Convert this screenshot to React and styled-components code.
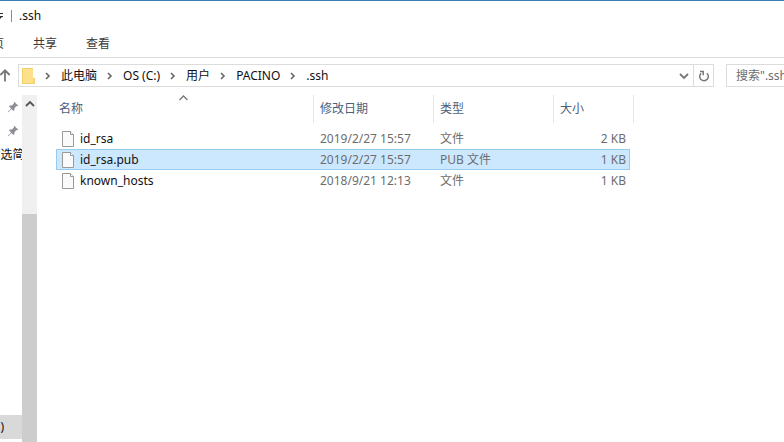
import React from 'react';
import styled, { createGlobalStyle } from 'styled-components';

const colors = {
  accent: '#3c7db5',
  line: '#dcdcdc',
  text: '#111',
  grey: '#6d6d6d',
  header: '#4c607a',
  selected: '#cce8ff',
  selectedLine: '#99cbf0',
};

const GlobalStyle = createGlobalStyle`
  *{
    box-sizing:border-box;
  }
  body{
    margin:0;
    background:#fff;
    color:${colors.text};
    font-family:"Noto Sans", "Noto Sans CJK SC", sans-serif;
    font-size:12px;
    line-height:20px;
  }
  button, input{
    font:inherit;
    color:inherit;
    border:none;
    background:none;
    padding:0;
    margin:0;
  }
  a{
    color:inherit;
    text-decoration:none;
  }
`;

const Window = styled.div`
  display:flex;
  flex-direction:column;
  height:100vh;
  overflow:hidden;
  border-top:1px solid ${colors.accent};
`;

const TitleBar = styled.header`
  display:flex;
  align-items:center;
  height:29px;
  flex:none;
`;

const Divider = styled.span`
  width:1px;
  height:12px;
  margin:0 7px;
  background:#8a8a8a;
`;

const Title = styled.h1`
  margin:0;
  font-size:12px;
  font-weight:400;
`;

const Ribbon = styled.nav`
  display:flex;
  align-items:center;
  gap:29px;
  height:28px;
  flex:none;
  margin-left:-20px;
  border-bottom:1px solid ${colors.line};
  color:#3b3b3b;
`;

const Toolbar = styled.div`
  display:flex;
  align-items:center;
  flex:none;
  height:37px;
  padding-bottom:2px;
`;

const UpButton = styled.button`
  display:flex;
  width:18px;
  justify-content:flex-start;
`;

const AddressBar = styled.div`
  display:flex;
  align-items:stretch;
  flex:1;
  height:23px;
  border:1px solid ${colors.line};
`;

const Crumbs = styled.div`
  display:flex;
  align-items:center;
  flex:1;
  padding-left:3px;
`;

const Separator = styled.span`
  display:flex;
  justify-content:center;
  width:26px;
`;

const AddressButton = styled.button`
  display:flex;
  align-items:center;
  justify-content:center;
  width:20px;
  border-left:1px solid ${props => (props.$line ? colors.line : 'transparent')};
`;

const Search = styled.input`
  flex:none;
  width:58px;
  height:23px;
  margin-left:12px;
  padding-left:9px;
  border:1px solid ${colors.line};
  border-right:none;
  outline:none;
  &::placeholder{
    color:${colors.grey};
    opacity:1;
  }
`;

const Body = styled.div`
  display:flex;
  flex:1;
  min-height:0;
`;

const Sidebar = styled.nav`
  display:flex;
  flex-direction:column;
  width:22px;
  padding-right:1px;
  overflow:hidden;
`;

const SideLink = styled.a`
  display:flex;
  align-items:center;
  justify-content:${props => props.$justify || 'center'};
  flex:none;
  height:24px;
  padding-left:4px;
  padding-right:${props => (props.$justify ? 18 : 0)}px;
  white-space:nowrap;
  background:${props => (props.$active ? '#d9d9d9' : 'transparent')};
  margin-top:${props => (props.$active ? 'auto' : 0)};
  margin-bottom:${props => (props.$active ? 3 : 0)}px;
`;

const Scrollbar = styled.div`
  display:flex;
  flex-direction:column;
  width:15px;
  background:#f0f0f0;
`;

const ScrollUp = styled.button`
  display:flex;
  align-items:center;
  justify-content:center;
  height:119px;
  padding-bottom:101px;
`;

const Thumb = styled.div`
  flex:1;
  background:#cdcdcd;
`;

const Files = styled.main`
  flex:1;
  min-width:0;
  padding-left:19px;
`;

const FileTable = styled.table`
  table-layout:fixed;
  width:578px;
  border-collapse:separate;
  border-spacing:0;
  tbody:before{
    content:"";
    display:block;
    height:5px;
  }
`;

const HeadCell = styled.th`
  position:relative;
  height:28px;
  padding:0 0 0 ${props => (props.$first ? 3 : 6)}px;
  border-right:1px solid #e5e5e5;
  color:${colors.header};
  font-weight:400;
  text-align:left;
`;

const SortMark = styled.svg`
  position:absolute;
  top:0;
  left:50%;
  margin-left:-6px;
`;

const Cell = styled.td`
  height:21px;
  padding:0 ${props => (props.$right ? 3 : 0)}px 0 6px;
  line-height:19px;
  text-align:${props => (props.$right ? 'right' : 'left')};
  color:${colors.grey};
`;

const NameCell = styled(Cell)`
  padding-left:5px;
  color:${colors.text};
`;

const FileName = styled.span`
  display:flex;
  align-items:center;
  gap:6px;
`;

const Row = styled.tr`
  ${Cell}, ${NameCell}{
    border:1px solid transparent;
    border-width:1px 0;
    ${props => props.$selected && `
      background:${colors.selected};
      border-color:${colors.selectedLine};
    `}
  }
  ${NameCell}{
    border-left-width:1px;
  }
  ${Cell}:nth-child(4){
    border-right-width:1px;
  }
`;

const Chevron = ({ d, color = '#666', width = 1.6 }) => (
  <svg width="10" height="10" viewBox="0 0 10 10" fill="none" stroke={color} strokeWidth={width}>
    <path d={d} />
  </svg>
);

const Pin = () => (
  <svg width="12" height="12" viewBox="0 0 12 12" fill="#8c8f93">
    <path d="M7.2.7 11.3 4.8 10.3 5.3 9.5 5 7.5 7 7.4 9.2 6.6 10 4.5 7.9 1 11.4.6 11 4.1 7.5 2 5.4 2.8 4.6 5 4.5 7 2.5 6.7 1.7Z" />
  </svg>
);

const FileIcon = () => (
  <svg width="12" height="16" viewBox="0 0 12 16">
    <path d="M.5.5h8l3 3v12H.5z" fill="#fafafa" stroke="#999" />
    <path d="M8.5.5v3h3" fill="#fff" stroke="#999" />
  </svg>
);

const FolderIcon = () => (
  <svg width="13" height="16" viewBox="0 0 13 16">
    <path d="M0 0h11v10h2v6H0z" fill="#f3d06c" />
    <path d="M1 1h10v14H1z" fill="#fde08a" />
    <path d="M11 10.5h1.5V15H11z" fill="#f6d678" />
  </svg>
);

const crumbs = ['此电脑', 'OS (C:)', '用户', 'PACINO', '.ssh'];

const files = [
  { name: 'id_rsa', date: '2019/2/27 15:57', type: '文件', size: '2 KB' },
  { name: 'id_rsa.pub', date: '2019/2/27 15:57', type: 'PUB 文件', size: '1 KB', selected: true },
  { name: 'known_hosts', date: '2018/9/21 12:13', type: '文件', size: '1 KB' },
];

const App = () => (
  <Window>
    <GlobalStyle />
    <TitleBar>
      <svg width="4" height="10" viewBox="0 0 4 10" fill="#333">
        <path d="M0 2h3v1H0zM0 5h3v1H2L0 8z" />
      </svg>
      <Divider />
      <Title>.ssh</Title>
    </TitleBar>
    <Ribbon>
      <a href="#home">主页</a>
      <a href="#share">共享</a>
      <a href="#view">查看</a>
    </Ribbon>
    <Toolbar>
      <UpButton aria-label="上移">
        <svg width="11" height="13" viewBox="0 0 11 13" fill="none" stroke="#777" strokeWidth="1.8">
          <path d="M5 12.5V1.5M.3 6 5 1.3 9.7 6" />
        </svg>
      </UpButton>
      <AddressBar>
        <Crumbs>
          <FolderIcon />
          {crumbs.map(crumb => (
            <React.Fragment key={crumb}>
              <Separator><Chevron d="M3 2l3 3-3 3" /></Separator>
              <a href="#crumb">{crumb}</a>
            </React.Fragment>
          ))}
        </Crumbs>
        <AddressButton aria-label="历史记录">
          <Chevron d="M1 3l4 4 4-4" color="#777" width={1.8} />
        </AddressButton>
        <AddressButton $line aria-label="刷新">
          <svg width="12" height="12" viewBox="0 0 12 12" fill="none" stroke="#777" strokeWidth="1.5">
            <path d="M8.8 3.2A4.3 4.3 0 1 1 3 3.4" />
            <path d="M2 1.6h3.2v3.6" />
          </svg>
        </AddressButton>
      </AddressBar>
      <Search aria-label="搜索" placeholder={'搜索".ssh"'} />
    </Toolbar>
    <Body>
      <Sidebar>
        <SideLink href="#pin1" aria-label="已固定"><Pin /></SideLink>
        <SideLink href="#pin2" aria-label="已固定"><Pin /></SideLink>
        <SideLink href="#resume">筛选简历</SideLink>
        <SideLink href="#drive" $active $justify="flex-end">OS (C:)</SideLink>
      </Sidebar>
      <Scrollbar>
        <ScrollUp aria-label="向上滚动">
          <Chevron d="M1 7l4-4 4 4" color="#555" width={1.8} />
        </ScrollUp>
        <Thumb />
      </Scrollbar>
      <Files>
        <FileTable>
          <colgroup>
            <col style={{ width: 258 }} />
            <col style={{ width: 120 }} />
            <col style={{ width: 120 }} />
            <col style={{ width: 76 }} />
            <col />
          </colgroup>
          <thead>
            <tr>
              <HeadCell $first>
                名称
                <SortMark width="9" height="6" viewBox="0 0 9 6" fill="none" stroke="#777" strokeWidth="1.3">
                  <path d="M.5 5 4.5 1l4 4" />
                </SortMark>
              </HeadCell>
              <HeadCell>修改日期</HeadCell>
              <HeadCell>类型</HeadCell>
              <HeadCell colSpan="2">大小</HeadCell>
            </tr>
          </thead>
          <tbody>
            {files.map(file => (
              <Row key={file.name} $selected={file.selected}>
                <NameCell>
                  <FileName><FileIcon />{file.name}</FileName>
                </NameCell>
                <Cell>{file.date}</Cell>
                <Cell>{file.type}</Cell>
                <Cell $right>{file.size}</Cell>
              </Row>
            ))}
          </tbody>
        </FileTable>
      </Files>
    </Body>
  </Window>
);

export default App;
